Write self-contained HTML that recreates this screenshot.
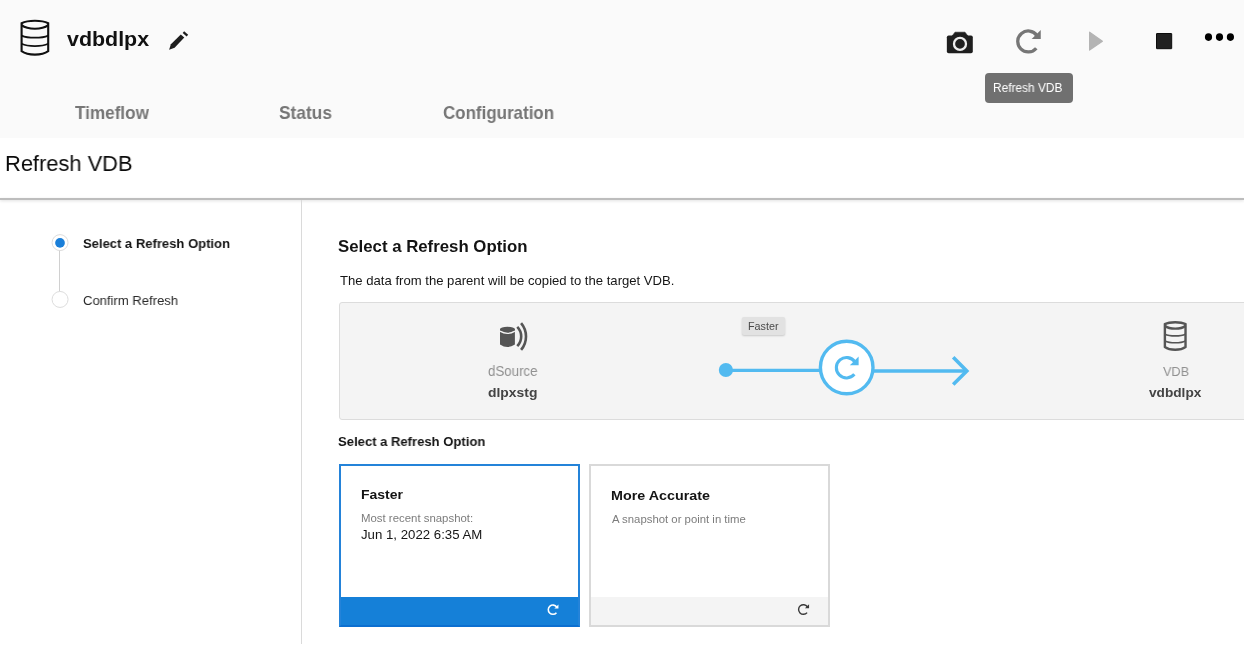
<!DOCTYPE html>
<html><head><meta charset="utf-8">
<style>
html,body{margin:0;padding:0;width:1256px;height:650px;overflow:hidden;background:#fff;}
body{position:relative;font-family:"Liberation Sans",sans-serif;}
.t{position:absolute;white-space:nowrap;line-height:1;transform-origin:0 0;will-change:transform;}
.b{font-weight:bold;}
#hdr{position:absolute;left:0;top:0;width:1244px;height:138px;background:#fafafa;}
#hline{position:absolute;left:0;top:198px;width:1244px;height:2px;background:#bdbdbd;box-shadow:0 1px 3px rgba(0,0,0,0.14);}
#vline{position:absolute;left:301px;top:200px;width:1px;height:444px;background:#dadada;}
#tip{position:absolute;left:985px;top:73px;width:88px;height:30px;background:#707070;border-radius:4px;}
#diag{position:absolute;left:339px;top:302px;width:920px;height:116px;background:#f4f4f4;border:1px solid #dcdcdc;border-radius:3px;}
#chip{position:absolute;left:742px;top:317px;width:43px;height:18px;background:#e2e2e2;border-radius:2px;box-shadow:0 1px 2px rgba(0,0,0,0.18);}
.card{position:absolute;top:464px;width:237px;height:159px;background:#fff;border:2px solid #d9d9d9;}
.foot{position:absolute;left:0;right:0;bottom:0;height:28px;background:#f4f4f4;}
#c1{left:339px;border-color:#2483d9;border-bottom-color:#0c6fd0;}
#c1 .foot{background:#1580d8;}
#c2{left:589px;}
#clip{position:absolute;left:1244px;top:0;width:12px;height:650px;background:#fff;}
svg{position:absolute;left:0;top:0;}

</style></head><body>
<div id="hdr"></div>
<div id="tip"></div>
<div id="hline"></div>
<div id="vline"></div>
<div id="diag"></div>
<div id="chip"></div>
<div class="card" id="c1"><div class="foot"></div></div>
<div class="card" id="c2"><div class="foot"></div></div>
<div id="clip"></div>

<div class="t b" id="t0" style="left:66.65px;top:29.10px;font-size:20.20px;color:#111111;transform:scaleX(1.0607);">vdbdlpx</div>
<div class="t b" id="t1" style="left:75.38px;top:104.58px;font-size:17.80px;color:#767676;transform:scaleX(0.9635);">Timeflow</div>
<div class="t b" id="t2" style="left:278.63px;top:104.52px;font-size:17.80px;color:#767676;transform:scaleX(0.9742);">Status</div>
<div class="t b" id="t3" style="left:443.29px;top:104.58px;font-size:17.80px;color:#767676;transform:scaleX(0.9528);">Configuration</div>
<div class="t" id="t4" style="left:993.22px;top:81.93px;font-size:12.10px;color:#ffffff;transform:scaleX(0.9838);">Refresh VDB</div>
<div class="t" id="t5" style="left:4.62px;top:153.08px;font-size:22.00px;color:#0a0a0a;transform:scaleX(0.9934);">Refresh VDB</div>
<div class="t b" id="t6" style="left:82.84px;top:236.94px;font-size:13.30px;color:#161616;transform:scaleX(0.9798);">Select a Refresh Option</div>
<div class="t" id="t7" style="left:82.52px;top:293.53px;font-size:13.40px;color:#2a2a2a;transform:scaleX(0.9752);">Confirm Refresh</div>
<div class="t b" id="t8" style="left:338.04px;top:238.28px;font-size:16.50px;color:#141414;transform:scaleX(1.0176);">Select a Refresh Option</div>
<div class="t" id="t9" style="left:339.65px;top:273.56px;font-size:13.00px;color:#161616;transform:scaleX(1.0084);">The data from the parent will be copied to the target VDB.</div>
<div class="t" id="t10" style="left:747.88px;top:321.70px;font-size:10.20px;color:#4a4a4a;transform:scaleX(1.0573);">Faster</div>
<div class="t" id="t11" style="left:487.93px;top:364.45px;font-size:14.20px;color:#909090;transform:scaleX(0.9367);">dSource</div>
<div class="t b" id="t12" style="left:487.94px;top:385.94px;font-size:13.20px;color:#444444;transform:scaleX(1.0531);">dlpxstg</div>
<div class="t" id="t13" style="left:1163.09px;top:364.55px;font-size:13.60px;color:#909090;transform:scaleX(0.9318);">VDB</div>
<div class="t b" id="t14" style="left:1149.07px;top:385.71px;font-size:13.50px;color:#444444;transform:scaleX(1.0115);">vdbdlpx</div>
<div class="t b" id="t15" style="left:337.90px;top:434.74px;font-size:13.20px;color:#141414;transform:scaleX(0.9901);">Select a Refresh Option</div>
<div class="t b" id="t16" style="left:360.79px;top:488.12px;font-size:13.50px;color:#141414;transform:scaleX(1.0363);">Faster</div>
<div class="t" id="t17" style="left:360.66px;top:513.22px;font-size:11.30px;color:#7c7c7c;transform:scaleX(1.0091);">Most recent snapshot:</div>
<div class="t" id="t18" style="left:360.71px;top:527.55px;font-size:13.10px;color:#161616;transform:scaleX(1.0097);">Jun 1, 2022 6:35 AM</div>
<div class="t b" id="t19" style="left:610.53px;top:488.74px;font-size:13.30px;color:#141414;transform:scaleX(1.0762);">More Accurate</div>
<div class="t" id="t20" style="left:611.64px;top:514.19px;font-size:11.30px;color:#7c7c7c;transform:scaleX(1.0051);">A snapshot or point in time</div>
<svg width="1256" height="650" viewBox="0 0 1256 650">
<g fill="none" stroke="#111" stroke-linejoin="miter"><path d="M21.60,51.20 L21.60,23.20 A15.96,5.37 0 0 1 48.20,23.20 L48.20,51.20 A15.96,7.61 0 0 1 21.60,51.20 Z" stroke-width="2.1"/><path d="M21.60,25.10 A15.96,8.05 0 0 0 48.20,25.10" stroke-width="2.1"/><path d="M21.60,35.60 A15.96,4.70 0 0 0 48.20,35.60" stroke-width="1.8"/><path d="M21.60,43.80 A15.96,5.15 0 0 0 48.20,43.80" stroke-width="1.8"/></g>
<polygon points="169.1,49.8 170.9,44.3 180.8,34.4 184.3,37.6 174.6,47.8" fill="#1e1e1e"/>
<line x1="183.4" y1="32.2" x2="187.4" y2="35.7" stroke="#1e1e1e" stroke-width="2.3"/>
<rect x="946.85" y="35.5" width="25.95" height="17.7" rx="1.8" fill="#1e1e1e"/>
<path d="M952.2,35.9 L955.0,32.2 L965.0,32.2 L967.8,35.9 Z" fill="#1e1e1e" stroke="#1e1e1e" stroke-width="0.6" stroke-linejoin="round"/>
<circle cx="960" cy="43.9" r="6.0" fill="none" stroke="#ececec" stroke-width="2.3"/>
<path d="M1036.29,48.20 A10.50,10.50 0 1 1 1036.85,35.43" fill="none" stroke="#767676" stroke-width="3.30"/><polygon points="1040.76,29.91 1040.76,38.90 1031.65,38.90" fill="#767676"/>
<polygon points="1089.6,32.2 1102.4,41.15 1089.6,50.1" fill="#b4b4b4" stroke="#b4b4b4" stroke-width="1.2" stroke-linejoin="round"/>
<rect x="1156.5" y="33.5" width="15.2" height="15.2" rx="0.3" fill="#212121" stroke="#0c0c0c" stroke-width="1"/>
<ellipse cx="1208.5" cy="37.1" rx="3.6" ry="3.8" fill="#000"/>
<ellipse cx="1219.5" cy="37.1" rx="3.6" ry="3.8" fill="#000"/>
<ellipse cx="1230.4" cy="37.1" rx="3.6" ry="3.8" fill="#000"/>
<line x1="59.5" y1="251" x2="59.5" y2="291" stroke="#d0d0d0" stroke-width="1"/>
<circle cx="60.05" cy="242.6" r="8" fill="#fff" stroke="#dcdcdc" stroke-width="1"/>
<circle cx="60" cy="242.9" r="4.85" fill="#1a7fd9"/>
<circle cx="60.05" cy="299.45" r="8" fill="#fff" stroke="#dcdcdc" stroke-width="1"/>
<path d="M500,329.1 L500,344.6 Q507.45,349.6 514.9,344.6 L514.9,329.1 Z" fill="#555"/>
<path d="M500,331.1 Q507.45,335.6 514.9,331.1" fill="none" stroke="#f4f4f4" stroke-width="1.3"/>
<ellipse cx="507.45" cy="329.1" rx="7.45" ry="2.3" fill="#555"/>
<path d="M517.27,326.90 A13.7,13.7 0 0 1 517.27,346.10" fill="none" stroke="#555" stroke-width="2.6"/><path d="M521.08,323.10 A20.7,20.7 0 0 1 521.08,349.90" fill="none" stroke="#555" stroke-width="2.6"/>
<g fill="none" stroke="#555" stroke-linejoin="miter"><path d="M1164.88,346.92 L1164.88,324.15 A12.39,4.37 0 0 1 1185.52,324.15 L1185.52,346.92 A12.39,6.19 0 0 1 1164.88,346.92 Z" stroke-width="2.4"/><path d="M1164.88,325.69 A12.39,6.55 0 0 0 1185.52,325.69" stroke-width="2.4"/><path d="M1164.88,334.23 A12.39,3.82 0 0 0 1185.52,334.23" stroke-width="1.7"/><path d="M1164.88,340.90 A12.39,4.19 0 0 0 1185.52,340.90" stroke-width="1.7"/></g>
<circle cx="725.9" cy="370" r="7.1" fill="#52baf0"/>
<line x1="726" y1="370.4" x2="820" y2="370.4" stroke="#52baf0" stroke-width="3.3"/>
<line x1="873" y1="370.9" x2="966" y2="370.9" stroke="#52baf0" stroke-width="3.5"/>
<polyline points="953.2,357.3 966.8,370.9 953.2,384.5" fill="none" stroke="#52baf0" stroke-width="3.6"/>
<circle cx="846.7" cy="367.5" r="26.3" fill="#fff" stroke="#52baf0" stroke-width="3.4"/>
<path d="M854.36,374.31 A10.20,10.20 0 1 1 854.91,361.90" fill="none" stroke="#52baf0" stroke-width="3.10"/><polygon points="858.65,356.59 858.65,365.28 849.84,365.28" fill="#52baf0"/>
<path d="M556.44,612.67 A4.62,4.62 0 1 1 556.69,607.05" fill="none" stroke="#fff" stroke-width="1.55"/><polygon points="558.46,604.57 558.46,608.57 554.41,608.57" fill="#fff"/>
<path d="M807.08,612.59 A4.80,4.80 0 1 1 807.33,606.75" fill="none" stroke="#383838" stroke-width="1.40"/><polygon points="809.06,604.27 809.06,608.35 804.94,608.35" fill="#383838"/>
</svg>
</body></html>
